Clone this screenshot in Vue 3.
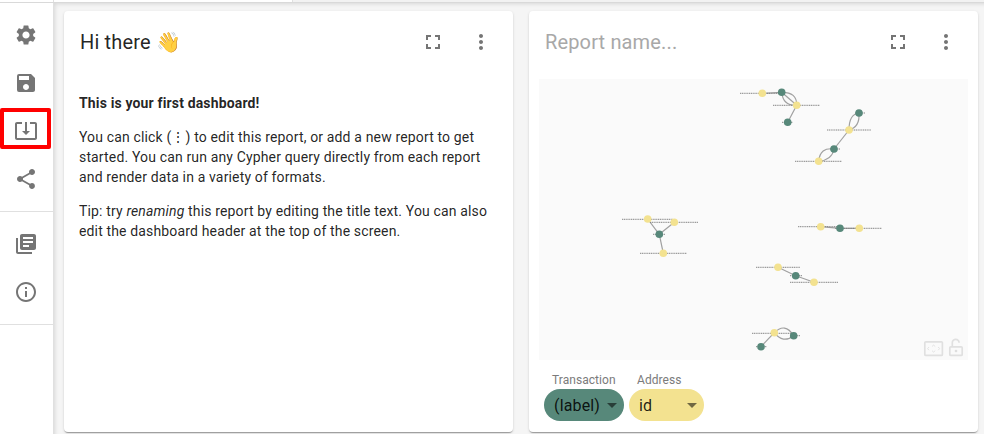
<script setup>
const nodes = [
  [762.3,93.3,'y'],[781.7,92.3,'g'],[796.7,105.3,'y'],[787.7,122.3,'g'],
  [859,113,'g'],[849,130,'y'],[834,149,'g'],[818.7,161.3,'y'],
  [647.7,219,'y'],[674.3,222.3,'y'],[659.3,234.3,'g'],[663.3,253.3,'y'],
  [820.7,226.7,'y'],[840,228.3,'g'],[859.3,228.3,'y'],
  [778,267.3,'y'],[795.7,275.7,'g'],[814,282.3,'y'],
  [774.3,332.7,'y'],[793.7,335.7,'g'],[761,346.7,'g']
]
const labels = [
  [740,783,93.3],[773,820,105.3],[782,793,122.3],
  [855,865,113],[827,871,130],[830,840,149],[795,842,161.3],
  [622,673,219.3],[650,698,222.3],[653,665,234.3],[640,687,253.3],
  [798,843,226.7],[835,882,228.3],
  [756,800,267.3],[790,802,275.7],[790,838,282.3],
  [752,793,333.3],[790,800,335.7],[756,767,346.7]
]
const edges = [
  'M781.7 92.3 L796.7 105.3','M781.7 92.3 Q797 92 796.7 105.3','M781.7 92.3 Q783 106 796.7 105.3','M762.3 93.3 L781.7 92.3','M796.7 105.3 L787.7 122.3',
  'M859 113 Q849 114 849 130','M859 113 Q860 127 849 130','M849 130 L834 149','M834 149 Q820 147 818.7 161.3','M834 149 Q832 160 818.7 161.3',
  'M647.7 219 L659.3 234.3','M674.3 222.3 L659.3 234.3','M659.3 234.3 L663.3 253.3',
  'M820.7 226.7 L840 228.3','M840 228.3 L859.3 228.3',
  'M778 267.3 L795.7 275.7','M795.7 275.7 L814 282.3',
  'M774.3 332.7 Q785 322 793.7 335.7','M774.3 332.7 Q783 344 793.7 335.7','M774.3 332.7 L761 346.7'
]
</script>

<template>
  <div class="page">
    <div class="topstrip"><div class="tl"></div><div class="tm"></div><div class="tr"></div></div>
    <div class="row">
      <aside class="side">
        <div class="group">
          <div class="ico"><svg viewBox="0 0 24 24"><path d="M19.14 12.94c.04-.3.06-.61.06-.94 0-.32-.02-.64-.07-.94l2.03-1.58a.49.49 0 0 0 .12-.61l-1.92-3.32a.488.488 0 0 0-.59-.22l-2.39.96c-.5-.38-1.03-.7-1.62-.94l-.36-2.54a.484.484 0 0 0-.48-.41h-3.84c-.24 0-.43.17-.47.41l-.36 2.54c-.59.24-1.13.57-1.62.94l-2.39-.96c-.22-.08-.47 0-.59.22L2.74 8.87c-.12.21-.08.47.12.61l2.03 1.58c-.05.3-.09.63-.09.94s.02.64.07.94l-2.03 1.58a.49.49 0 0 0-.12.61l1.92 3.32c.12.22.37.29.59.22l2.39-.96c.5.38 1.03.7 1.62.94l.36 2.54c.05.24.24.41.48.41h3.84c.24 0 .44-.17.47-.41l.36-2.54c.59-.24 1.13-.56 1.62-.94l2.39.96c.22.08.47 0 .59-.22l1.92-3.32c.12-.22.07-.47-.12-.61l-2.01-1.58zM12 15.6c-1.98 0-3.6-1.62-3.6-3.6s1.62-3.6 3.6-3.6 3.6 1.62 3.6 3.6-1.62 3.6-3.6 3.6z"/></svg></div>
          <div class="ico"><svg viewBox="0 0 24 24"><path d="M17 3H5a2 2 0 0 0-2 2v14a2 2 0 0 0 2 2h14c1.1 0 2-.9 2-2V7l-4-4zm-5 16c-1.66 0-3-1.34-3-3s1.34-3 3-3 3 1.34 3 3-1.34 3-3 3zm3-10H5V5h10v4z"/></svg></div>
          <div class="ico picked"><svg viewBox="0 0 24 24"><path d="M21 3H16v2h5v14H3V5h5V3H3c-1.1 0-2 .9-2 2v14c0 1.1.9 2 2 2h18c1.1 0 2-.9 2-2V5c0-1.1-.9-2-2-2z M12 16l4-4h-3V3h-2v9H8l4 4z"/></svg></div>
          <div class="ico"><svg viewBox="0 0 24 24"><path d="M18 16.08c-.76 0-1.44.3-1.96.77L8.91 12.7c.05-.23.09-.46.09-.7s-.04-.47-.09-.7l7.05-4.11c.54.5 1.25.81 2.04.81 1.66 0 3-1.34 3-3s-1.34-3-3-3-3 1.34-3 3c0 .24.04.47.09.7L8.04 9.81C7.5 9.31 6.79 9 6 9c-1.66 0-3 1.34-3 3s1.34 3 3 3c.79 0 1.5-.31 2.04-.81l7.12 4.16c-.05.21-.08.43-.08.65 0 1.61 1.31 2.92 2.92 2.92s2.92-1.31 2.92-2.92-1.31-2.92-2.92-2.92z"/></svg></div>
        </div>
        <div class="group">
          <div class="ico"><svg viewBox="0 0 24 24"><path d="M4 6H2v14c0 1.1.9 2 2 2h14v-2H4V6zm16-4H8c-1.1 0-2 .9-2 2v12c0 1.1.9 2 2 2h12c1.1 0 2-.9 2-2V4c0-1.1-.9-2-2-2zm-1 9H9V9h10v2zm-4 4H9v-2h6v2zm4-8H9V5h10v2z"/></svg></div>
          <div class="ico"><svg viewBox="0 0 24 24"><path d="M11 7h2v2h-2zm0 4h2v6h-2zm1-9C6.48 2 2 6.48 2 12s4.48 10 10 10 10-4.48 10-10S17.52 2 12 2zm0 18c-4.41 0-8-3.59-8-8s3.59-8 8-8 8 3.59 8 8-3.59 8-8 8z"/></svg></div>
        </div>
      </aside>

      <main class="main">
        <section class="card">
          <header class="head">
            <h2 class="title">Hi there 👋</h2>
            <svg class="act" viewBox="0 0 24 24"><path d="M7 14H5v5h5v-2H7v-3zm-2-4h2V7h3V5H5v5zm12 7h-3v2h5v-5h-2v3zM14 5v2h3v3h2V5h-5z"/></svg>
            <svg class="act more" viewBox="0 0 24 24"><path d="M12 8c1.1 0 2-.9 2-2s-.9-2-2-2-2 .9-2 2 .9 2 2 2zm0 2c-1.1 0-2 .9-2 2s.9 2 2 2 2-.9 2-2-.9-2-2-2zm0 6c-1.1 0-2 .9-2 2s.9 2 2 2 2-.9 2-2-.9-2-2-2z"/></svg>
          </header>
          <div class="copy">
            <p><b>This is your first dashboard!</b></p>
            <p>You can click (⋮) to edit this report, or add a new report to get started. You can run any Cypher query directly from each report and render data in a variety of formats.</p>
            <p>Tip: try <i>renaming</i> this report by editing the title text. You can also edit the dashboard header at the top of the screen.</p>
          </div>
        </section>

        <section class="card">
          <header class="head">
            <h2 class="title ph">Report name...</h2>
            <svg class="act" viewBox="0 0 24 24"><path d="M7 14H5v5h5v-2H7v-3zm-2-4h2V7h3V5H5v5zm12 7h-3v2h5v-5h-2v3zM14 5v2h3v3h2V5h-5z"/></svg>
            <svg class="act more" viewBox="0 0 24 24"><path d="M12 8c1.1 0 2-.9 2-2s-.9-2-2-2-2 .9-2 2 .9 2 2 2zm0 2c-1.1 0-2 .9-2 2s.9 2 2 2 2-.9 2-2-.9-2-2-2zm0 6c-1.1 0-2 .9-2 2s.9 2 2 2 2-.9 2-2-.9-2-2-2z"/></svg>
          </header>
          <div class="canvas">
            <svg class="graph" viewBox="539 79 429 281">
              <path v-for="(d,i) in edges" :key="'e'+i" :d="d" class="edge"/>
              <line v-for="(l,i) in labels" :key="'l'+i" :x1="l[0]" :x2="l[1]" :y1="l[2]" :y2="l[2]" class="lab"/>
              <circle v-for="(n,i) in nodes" :key="'n'+i" :cx="n[0]" :cy="n[1]" r="3.8" :class="n[2]==='y'?'ny':'ng'"/>
              <rect x="924.8" y="341.8" width="17.6" height="13.6" rx="1" class="ctl"/>
              <path d="M932 346.5l1.6-1.4 1.6 1.4M932 350.7l1.6 1.4 1.6-1.4M929 347l-1.4 1.6 1.4 1.6M938.2 347l1.4 1.6-1.4 1.6" class="ctl thin"/>
              <rect x="949.8" y="346.8" width="12.4" height="8.6" rx="1" class="ctl"/>
              <path d="M952.3 346.5v-3.7a3.4 3.4 0 0 1 6.8 0" class="ctl"/>
              <circle cx="956" cy="351" r="1.3" fill="#dedede"/>
            </svg>
          </div>
          <div class="legend">
            <div class="pick">
              <label>Transaction</label>
              <div class="chip green"><span>(label)</span><i class="caret"></i></div>
            </div>
            <div class="pick">
              <label>Address</label>
              <div class="chip yellow"><span>id</span><i class="caret"></i></div>
            </div>
          </div>
        </section>
      </main>
    </div>
  </div>
</template>

<style>
html, body { margin: 0; background: #f5f5f5; }
</style>

<style scoped>
.page { width: 984px; height: 434px; overflow: hidden; font-family: Roboto, sans-serif; color: rgba(0,0,0,.87); background: #f5f5f5; letter-spacing: .15px; }
.topstrip { display: flex; height: 2px; border-bottom: 1px solid #d9d9d9; }
.tl { width: 53px; background: #fff; border-right: 1px solid #e0e0e0; }
.tm { width: 238px; background: #fff; border-right: 1px solid #e0e0e0; }
.tr { flex: 1; background: #f2f2f2; }
.row { display: flex; height: 431px; }
.side { width: 53px; height: 431px; flex: none; background: #fff; border-right: 1px solid #e0e0e0; padding-top: 8px; box-sizing: content-box; }
.group { padding-bottom: 8px; border-bottom: 1px solid #e0e0e0; margin-bottom: 8px; }
.ico { height: 48px; padding-right: 1px; display: flex; align-items: center; justify-content: center; position: relative; }
.ico svg { width: 24px; height: 24px; fill: #757575; }
.picked::after { content: ""; position: absolute; left: 0; top: 1px; width: 43px; height: 33px; border: 4px solid #f00; border-radius: 2px; }
.main { flex: 1; display: flex; gap: 16px; padding: 8px 6px 2px 10px; min-width: 0; box-shadow: inset 3px 3px 4px -2px rgba(0,0,0,.12); }
.card { flex: 0 0 449px; height: 421px; background: #fff; border-radius: 4px; box-shadow: 0 2px 1px -1px rgba(0,0,0,.2), 0 1px 1px 0 rgba(0,0,0,.14), 0 1px 3px 0 rgba(0,0,0,.12); display: flex; flex-direction: column; }
.head { height: 62px; display: flex; align-items: center; padding: 0 16px; flex: none; }
.title { flex: 1; margin: 0; font-size: 20px; font-weight: 400; line-height: 62px; }
.ph { color: #a8a8a8; }
.act { width: 24px; height: 24px; fill: #757575; flex: none; }
.more { margin-left: 24px; margin-right: 4px; }
.copy { padding: 20px 16px 0 15px; font-size: 14px; line-height: 20px; }
.copy p { margin: 0 0 14px; }
.canvas { margin: 6px 10px 0; height: 281px; background: #fafafa; flex: none; }
.graph { display: block; width: 429px; height: 281px; filter: blur(.35px); }
.edge { fill: none; stroke: #a0a0a0; stroke-width: 1.2; }
.lab { stroke: #777; stroke-width: .9; stroke-dasharray: 1.2 .6; }
.ny { fill: #f3e290; }
.ng { fill: #57887a; }
.ctl { fill: none; stroke: #e0e0e0; stroke-width: 1.7; }
.thin { stroke-width: .9; }
.legend { display: flex; gap: 5px; padding: 12px 0 0 15px; }
.pick { display: flex; flex-direction: column; }
.pick label { font-size: 12px; line-height: 16px; color: #7b7b7b; padding-left: 8px; height: 16px; white-space: nowrap; margin-bottom: 1px; margin-top: 0; letter-spacing: .05px; }
.chip { height: 32px; border-radius: 16px; display: flex; align-items: center; font-size: 16px; padding-left: 10px; box-sizing: border-box; position: relative; }
.green { width: 80px; background: #57887a; }
.yellow { width: 75px; background: #f3e290; }
.caret { position: absolute; right: 7px; top: 14px; border: 5px solid transparent; border-top-color: rgba(0,0,0,.54); border-bottom: 0; }
</style>
